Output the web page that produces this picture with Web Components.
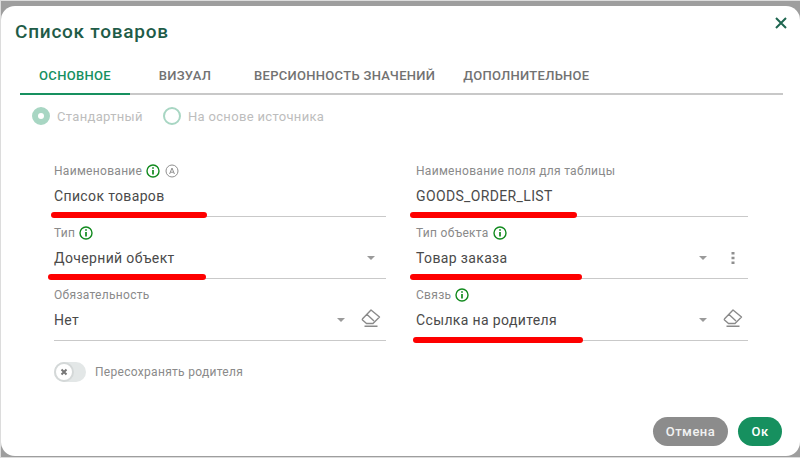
<!DOCTYPE html>
<html lang="ru">
<head>
<meta charset="utf-8">
<title>Список товаров</title>
<style>
html,body{margin:0;padding:0;width:800px;height:458px;overflow:hidden}
body{background:#9e9e9e;font-family:Roboto,"Liberation Sans",sans-serif;box-sizing:border-box;border:1px solid #dcdcdc;border-right:0}
</style>
</head>
<body>
<app-dialog heading="Список товаров">
  <app-tabs>
    <app-tab active>Основное</app-tab>
    <app-tab>Визуал</app-tab>
    <app-tab>Версионность значений</app-tab>
    <app-tab>Дополнительное</app-tab>
  </app-tabs>
  <app-radio-row>
    <app-radio checked>Стандартный</app-radio>
    <app-radio>На основе источника</app-radio>
  </app-radio-row>
  <app-form>
    <app-field label="Наименование" value="Список товаров" info auto mark="-3,156,54"></app-field>
    <app-field label="Наименование поля для таблицы" value="GOODS_ORDER_LIST" mark="-6,167,54"></app-field>
    <app-field label="Тип" value="Дочерний объект" info arrow="371" mark="-6,158,54"></app-field>
    <app-field label="Тип объекта" value="Товар заказа" info arrow="703" more mark="-6,172,54"></app-field>
    <app-field label="Обязательность" value="Нет" arrow="341" clear></app-field>
    <app-field label="Связь" value="Ссылка на родителя" info arrow="703" clear mark="-3,170,55"></app-field>
  </app-form>
  <app-switch>Пересохранять родителя</app-switch>
  <div slot="actions" style="display:flex;gap:10px">
    <app-button kind="cancel">Отмена</app-button>
    <app-button kind="ok">Ок</app-button>
  </div>
</app-dialog>
<script>
function def(name, html, init){
  customElements.define(name, class extends HTMLElement{
    constructor(){super();this.attachShadow({mode:'open'});this.shadowRoot.innerHTML=html}
    connectedCallback(){ if(init) init.call(this,this.shadowRoot) }
  });
}
def('app-dialog',`<style>
:host{display:flex;flex-direction:column;position:absolute;left:1px;right:0;top:6px;bottom:2px;background:#fff;border-radius:14px;box-sizing:border-box;padding:13px 18px 10px 19px}
.head{display:flex;justify-content:space-between}
h1{margin:0;font:500 19px/26px Roboto,sans-serif;letter-spacing:.76px;color:#1f5c48;margin-left:-5px}
.x{margin:-3px -6px 0 0;width:14px;height:14px}
.body{flex:1;display:flex;flex-direction:column;margin-top:12px}
.foot{display:flex;justify-content:flex-end}
</style><div class="head"><h1></h1><svg class="x" viewBox="0 0 14 14"><path d="M2 2l10 10M12 2L2 12" stroke="#1f6650" stroke-width="2" fill="none"/></svg></div>
<div class="body"><slot></slot></div><div class="foot"><slot name="actions"></slot></div>`,function(s){s.querySelector('h1').textContent=this.getAttribute('heading')});
def('app-tabs',`<style>:host{display:flex;border-bottom:2px solid #c8c8c8;height:36px;margin-right:-1px}</style><slot></slot>`);
def('app-tab',`<style>:host{display:flex;align-items:center;justify-content:center;box-sizing:border-box;min-width:110px;padding:0 14px;height:38px;border-bottom:2px solid transparent;font:500 13px Roboto,sans-serif;letter-spacing:.3px;text-transform:uppercase;color:#727272}
:host([active]){color:#16905f;border-bottom-color:#16905f}</style><slot></slot>`);
def('app-radio-row',`<style>:host{display:flex;gap:20px;padding-left:12px;margin-top:12px;height:18px}</style><slot></slot>`);
def('app-radio',`<style>:host{display:flex;align-items:center;gap:7px;font:13px Roboto,sans-serif;letter-spacing:.33px;color:#bdbdbd}
i{box-sizing:border-box;width:18px;height:18px;border-radius:50%;border:2px solid #a8d6c3;display:flex;align-items:center;justify-content:center}
:host([checked]) i{background:#a8d6c3}
:host([checked]) i::after{content:"";width:6px;height:6px;border-radius:50%;background:#fff}
</style><i></i><span><slot></slot></span>`);
def('app-form',`<style>:host{display:grid;grid-template-columns:332px 332px;column-gap:30px;padding-left:34px;margin-top:33px}</style><slot></slot>`);
const infoIcon=`<svg width="14" height="14" viewBox="0 0 14 14"><circle cx="7" cy="7" r="6" fill="none" stroke="#118a1e" stroke-width="1.4"/><path d="M7 3.3v1.5M7 5.9v4.6" stroke="#118a1e" stroke-width="1.7" fill="none"/></svg>`;
const autoIcon=`<svg width="14" height="14" viewBox="0 0 14 14"><circle cx="7" cy="7" r="6" fill="none" stroke="#8f8f8f" stroke-width="1"/><path d="M4.6 10L7 4l2.4 6M5.4 8.2h3.2" stroke="#8f8f8f" stroke-width="1" fill="none"/></svg>`;
const eraser=`<svg class="er" width="20" height="18" viewBox="0 0 20 18"><path d="M10 1L18.5 8 12 14.5H5.5L1.5 11Q1 10.4 1.6 9.7ZM5.5 5L13 12M3.5 17.3H16.5" fill="none" stroke="#8a8a8a" stroke-width="1.4" stroke-linejoin="round"/></svg>`;
const more=`<svg class="more" width="4" height="12" viewBox="0 0 4 12"><path d="M.5 0h3v2.6h-3zM.5 4.7h3v2.6h-3zM.5 9.4h3V12h-3z" fill="#8f8f8f"/></svg>`;
def('app-field',`<style>
:host{display:block;position:relative;height:62px;box-sizing:border-box;padding-top:4px;font-family:Roboto,sans-serif}
.lab{display:flex;align-items:center;gap:4px;height:18px;font-size:12px;letter-spacing:.3px;color:#8a8a8a}
.lab svg+svg{margin-left:1px}
.val{font-size:14px;letter-spacing:.36px;color:#4a4a4a;line-height:20px;margin-top:6px;height:14px}
.line{position:absolute;left:0;right:0;top:58px;border-top:1px solid #c9c9c9}
.arrow{position:absolute;top:36px;width:0;height:0;border:4px solid transparent;border-top-color:#9a9a9a;border-bottom:0}
.er{position:absolute;right:5px;top:27px}
.more{position:absolute;right:13px;top:32px}
.mark{position:absolute;height:5.5px;border-radius:3px;background:#fe0000}
</style><div class="lab"><span></span></div><div class="val"></div><div class="line"></div><div class="extras"></div>`,function(s){
  if(this._d)return;this._d=1;
  s.querySelector('.lab span').textContent=this.getAttribute('label');
  s.querySelector('.val').textContent=this.getAttribute('value');
  const lab=s.querySelector('.lab'), ex=s.querySelector('.extras');
  if(this.hasAttribute('info'))lab.insertAdjacentHTML('beforeend',infoIcon);
  if(this.hasAttribute('auto'))lab.insertAdjacentHTML('beforeend',autoIcon);
  const left=Math.round(this.getBoundingClientRect().left);
  if(this.hasAttribute('arrow')){const a=document.createElement('div');a.className='arrow';a.style.left=(+this.getAttribute('arrow')-4-left)+'px';ex.appendChild(a)}
  if(this.hasAttribute('clear'))ex.insertAdjacentHTML('beforeend',eraser);
  if(this.hasAttribute('more'))ex.insertAdjacentHTML('beforeend',more);
  if(this.hasAttribute('mark')){const [l,w,t]=this.getAttribute('mark').split(',');const m=document.createElement('div');m.className='mark';m.style.left=l+'px';m.style.width=w+'px';m.style.top=t+'px';ex.appendChild(m)}
});
def('app-switch',`<style>:host{display:flex;align-items:center;gap:9px;margin:18px 0 0 34px;height:20px;font:12px Roboto,sans-serif;letter-spacing:.3px;color:#8a8a8a}
.t{position:relative;width:32px;height:20px;border-radius:10px;background:#e3e7e7}
.k{position:absolute;left:0;top:0;width:20px;height:20px;box-sizing:border-box;border-radius:50%;background:#fff;border:2.5px solid #d4d8d8;display:flex;align-items:center;justify-content:center}
</style><div class="t"><div class="k"><svg width="8" height="8" viewBox="0 0 8 8"><path d="M1.5 1.5l5 5M6.5 1.5l-5 5" stroke="#777" stroke-width="2"/></svg></div></div><span><slot></slot></span>`);
def('app-button',`<style>:host{display:flex;align-items:center;justify-content:center;height:29px;border-radius:15px;color:#fff;font:500 13px Roboto,sans-serif;letter-spacing:.5px;box-sizing:border-box}
:host([kind=cancel]){width:75px;background:#8c8c8c;color:#f2f2f2}
:host([kind=ok]){width:44px;background:#16905f}</style><slot></slot>`);
</script>
</body>
</html>
